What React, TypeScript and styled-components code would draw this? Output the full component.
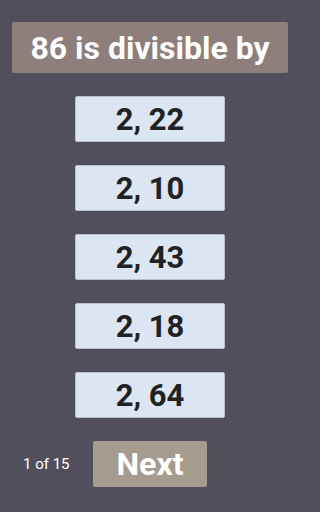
import React from "react";
import styled, { createGlobalStyle } from "styled-components";

const GlobalStyle = createGlobalStyle`
  html, body {
    margin: 0;
    padding: 0;
    background: #524f5d;
  }
  body {
    font-family: Roboto, "Liberation Sans", sans-serif;
  }
`;

const choices = ["2, 22", "2, 10", "2, 43", "2, 18", "2, 64"];

const Page = styled.div`
  width: 300px;
  height: 512px;
  box-sizing: border-box;
  padding: 22px 12px 0;
  display: flex;
  flex-direction: column;
  align-items: center;
`;

const Question = styled.div`
  width: 100%;
  height: 51px;
  background: #8e7f7c;
  border-radius: 2px;
  color: #ffffff;
  font-weight: 700;
  font-size: 32px;
  display: flex;
  align-items: center;
  justify-content: center;
`;

const Choices = styled.div`
  margin-top: 23px;
  display: flex;
  flex-direction: column;
  gap: 23px;
`;

const Choice = styled.button`
  width: 150px;
  height: 46px;
  box-sizing: border-box;
  background: #dce6f2;
  border: 1px solid #b9c0cc;
  border-radius: 2px;
  color: #222222;
  font-family: inherit;
  font-weight: 700;
  font-size: 31px;
  padding: 0;
  display: flex;
  align-items: center;
  justify-content: center;
`;

const Footer = styled.div`
  margin-top: 23px;
  width: 100%;
  display: flex;
  align-items: center;
`;

const Counter = styled.div`
  width: 81px;
  padding-left: 11px;
  box-sizing: border-box;
  color: #ffffff;
  font-size: 15px;
`;

const NextButton = styled.button`
  width: 114px;
  height: 46px;
  background: #a69b8f;
  border: none;
  border-radius: 2px;
  color: #ffffff;
  font-family: inherit;
  font-weight: 700;
  font-size: 32px;
  padding: 0;
`;

export default function App() {
  return (
    <>
      <GlobalStyle />
      <Page>
        <Question>86 is divisible by</Question>
        <Choices>
          {choices.map((c) => (
            <Choice key={c}>{c}</Choice>
          ))}
        </Choices>
        <Footer>
          <Counter>1 of 15</Counter>
          <NextButton>Next</NextButton>
        </Footer>
      </Page>
    </>
  );
}
